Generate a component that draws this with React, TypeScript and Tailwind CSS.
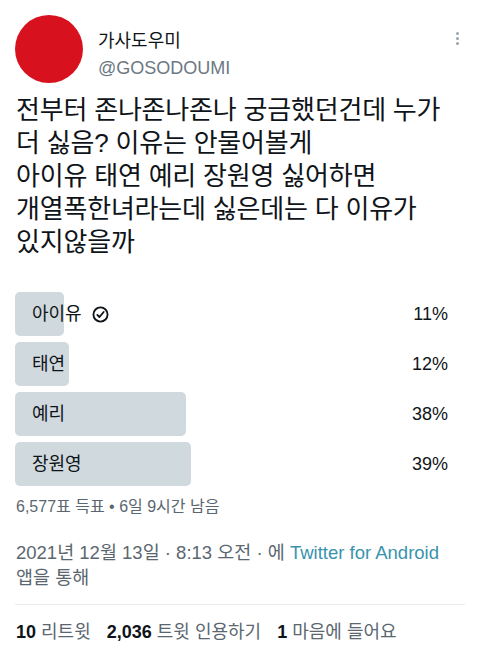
import React from "react";

const font = { fontFamily: '"Liberation Sans", "Noto Sans CJK KR", sans-serif' };

const options = [
  { label: "아이유", pct: 11, width: 49, mine: true },
  { label: "태연", pct: 12, width: 54, mine: false },
  { label: "예리", pct: 38, width: 171, mine: false },
  { label: "장원영", pct: 39, width: 176, mine: false },
];

function CheckCircle() {
  return (
    <svg width="17" height="17" viewBox="0 0 24 24" fill="none" stroke="#0f1419" strokeWidth="2.6" strokeLinecap="round" strokeLinejoin="round">
      <circle cx="12" cy="12" r="10" />
      <path d="M7.5 12.5l3 3 6-7" />
    </svg>
  );
}

export default function App() {
  return (
    <div className="w-[480px] h-[660px] bg-white overflow-hidden text-[#0f1419]" style={font}>
      {/* header */}
      <div className="flex pt-[15px] pl-[15px] pr-[21px]">
        <div className="w-[68px] h-[68px] rounded-full bg-[#d8111e] shrink-0" />
        <div className="ml-[15px] flex flex-col">
          <div className="mt-[14px] text-[18px] leading-[24px]">가사도우미</div>
          <div className="mt-[3px] text-[18px] leading-[24px] text-[#6b7882]">@GOSODOUMI</div>
        </div>
        <div className="ml-auto mt-[17px] flex flex-col gap-[2px]">
          <span className="w-[3px] h-[3px] rounded-full bg-[#9aa4ad]" />
          <span className="w-[3px] h-[3px] rounded-full bg-[#9aa4ad]" />
          <span className="w-[3px] h-[3px] rounded-full bg-[#9aa4ad]" />
        </div>
      </div>

      {/* tweet text */}
      <div className="mt-[11px] px-[16px] text-[26px] leading-[33px] tracking-[-0.2px]">
        <p>전부터 존나존나존나 궁금했던건데 누가</p>
        <p>더 싫음? 이유는 안물어볼게</p>
        <p>아이유 태연 예리 장원영 싫어하면</p>
        <p>개열폭한녀라는데 싫은데는 다 이유가</p>
        <p>있지않을까</p>
      </div>

      {/* poll */}
      <div className="mt-[33px] px-[15px] flex flex-col gap-[6px]">
        {options.map((o) => (
          <div key={o.label} className="relative h-[44px] flex items-center">
            <div className="absolute left-0 top-0 h-full rounded-[5px] bg-[#cfd9de]" style={{ width: o.width }} />
            <div className="relative flex items-center gap-[10px] pl-[17px] text-[18px]">
              <span>{o.label}</span>
              {o.mine && <CheckCircle />}
            </div>
            <div className="relative ml-auto pr-[17px] text-[18px]">{o.pct}%</div>
          </div>
        ))}
      </div>

      <div className="mt-[11px] px-[16px] text-[16px] leading-[20px] text-[#5b6770]">
        6,577표 득표 • 6일 9시간 남음
      </div>

      {/* meta */}
      <div className="mt-[23px] px-[16px] text-[18.5px] leading-[25px] text-[#5b6770]">
        <p>
          2021년 12월 13일 · 8:13 오전 · 에 <span className="text-[#3a93ad]">Twitter for Android</span>
        </p>
        <p>앱을 통해</p>
      </div>

      <div className="mt-[14px] mx-[15px] h-px bg-[#e6ecf0]" />

      {/* stats */}
      <div className="mt-[15px] px-[16px] flex gap-[16px] text-[18px] leading-[24px]">
        <span>
          <b className="font-bold">10</b> <span className="text-[#5b6770]">리트윗</span>
        </span>
        <span>
          <b className="font-bold">2,036</b> <span className="text-[#5b6770]">트윗 인용하기</span>
        </span>
        <span>
          <b className="font-bold">1</b> <span className="text-[#5b6770]">마음에 들어요</span>
        </span>
      </div>
    </div>
  );
}
